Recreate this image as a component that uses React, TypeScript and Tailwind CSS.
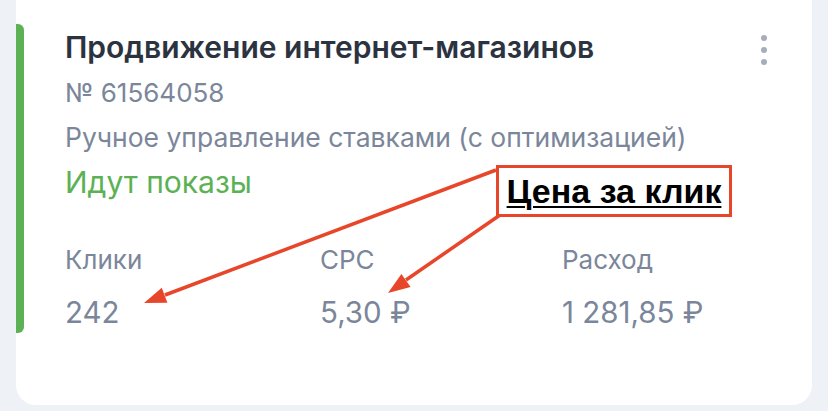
import React from "react";

const sans = { fontFamily: "Inter, 'Noto Sans', sans-serif" };

function Stat({ label, value }: { label: string; value: string }) {
  return (
    <div className="flex flex-col">
      <span className="text-[26px] leading-[45px] text-[#7b869a]">{label}</span>
      <span className="mt-[7px] text-[29.5px] leading-[46px] text-[#7b869a]">{value}</span>
    </div>
  );
}

export default function App() {
  return (
    <div className="w-[828px] h-[411px] overflow-hidden bg-[#eef1f6] px-4" style={sans}>
      <div className="relative h-[405px] rounded-b-[20px] bg-white">
        {/* status accent */}
        <div className="absolute left-0 top-[24px] h-[309px] w-2 rounded-r-[6px] bg-[#5cb155]" />

        {/* menu dots */}
        <div className="absolute right-[45px] top-[35px] flex flex-col gap-[6px]">
          <span className="h-[6px] w-[6px] rounded-full bg-[#a6aebb]" />
          <span className="h-[6px] w-[6px] rounded-full bg-[#a6aebb]" />
          <span className="h-[6px] w-[6px] rounded-full bg-[#a6aebb]" />
        </div>

        <div className="pl-[49px] pt-[25px]">
          <h2 className="text-[30px] font-semibold leading-[45px] text-[#2c3340]">
            Продвижение интернет-магазинов
          </h2>
          <p className="text-[26px] leading-[45px] text-[#7b869a]">№ 61564058</p>
          <p className="text-[26.5px] leading-[45px] text-[#7b869a]">
            Ручное управление ставками (с оптимизацией)
          </p>
          <p className="text-[30px] leading-[45px] text-[#5cb155]">Идут показы</p>

          <div className="mt-[32px] grid grid-cols-[255px_242px_auto]">
            <Stat label="Клики" value="242" />
            <Stat label="CPC" value="5,30 ₽" />
            <Stat label="Расход" value="1 281,85 ₽" />
          </div>
        </div>

        {/* annotation */}
        <div className="absolute left-[480px] top-[165px] flex h-[52px] w-[236px] items-center justify-center border-[3px] border-[#e8462b] bg-white">
          <span
            className="text-[34px] font-bold leading-none text-black underline decoration-2 underline-offset-[3px]"
            style={{ fontFamily: "'Liberation Sans', Arial, sans-serif" }}
          >
            Цена за клик
          </span>
        </div>
        <svg className="pointer-events-none absolute inset-0" width="796" height="405" viewBox="0 0 796 405">
          <line x1="480" y1="170" x2="149" y2="295" stroke="#e8462b" strokeWidth="3.5" />
          <polygon points="128,303 151.4,302.7 145.8,287.7" fill="#e8462b" />
          <line x1="484" y1="215" x2="390" y2="280" stroke="#e8462b" strokeWidth="3.5" />
          <polygon points="372,293 394.6,287 385.4,273.9" fill="#e8462b" />
        </svg>
      </div>
    </div>
  );
}
